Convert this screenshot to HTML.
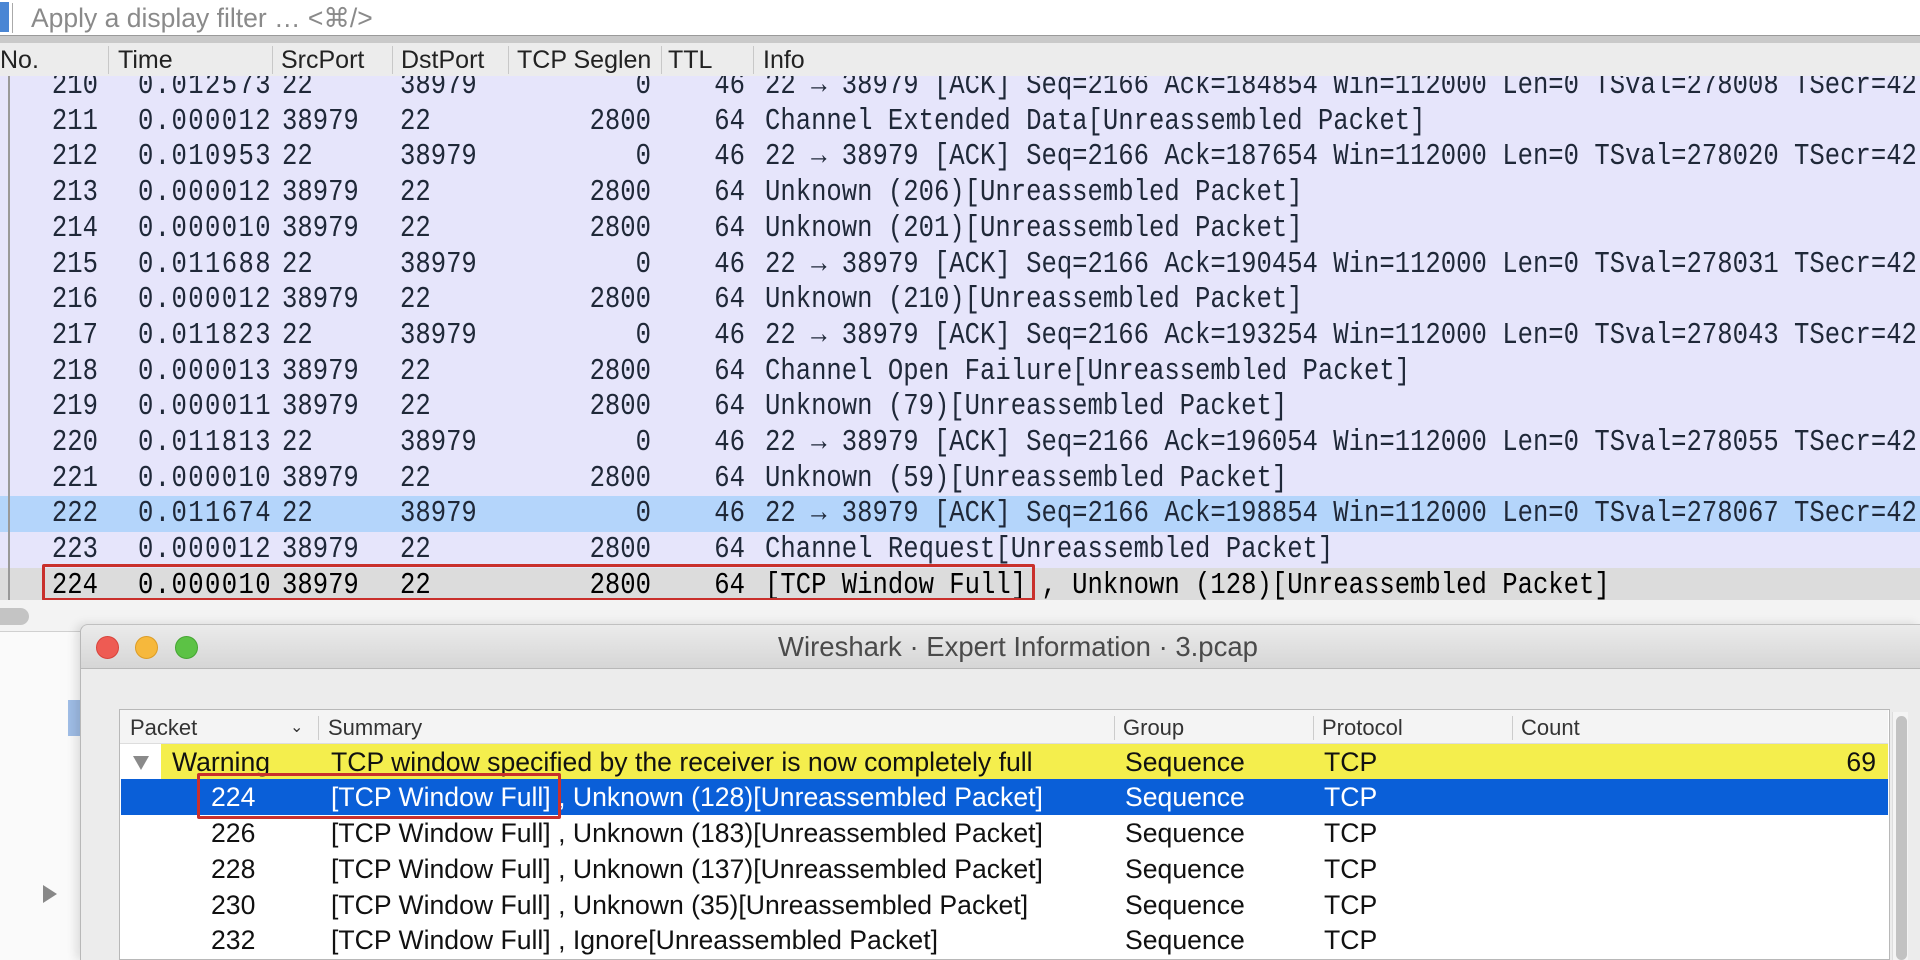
<!DOCTYPE html>
<html><head><meta charset="utf-8"><style>
*{margin:0;padding:0;box-sizing:border-box}
body{width:1920px;height:960px;overflow:hidden;background:#ececec;position:relative;font-family:"Liberation Sans",sans-serif}
.abs{position:absolute}
.mono{font-family:"Liberation Mono","DejaVu Sans Mono",monospace;font-size:25.6px;color:#1f2838;white-space:pre}
.row{position:absolute;left:0;width:1920px;height:36px;background:#e6e5fb}
.row span{position:absolute;top:0;line-height:36px;transform:scaleY(1.18);transform-origin:50% 55%}
.row span:nth-child(2){letter-spacing:1.4px}
.r{text-align:right}
.hd{position:absolute;top:43px;height:33px;line-height:35px;font-size:25px;color:#222}
.dv{position:absolute;top:46px;height:28px;width:1px;background:#c8c8c8}
.er{position:absolute;left:121px;width:1767px;height:36px;font-size:26.6px;line-height:36px;color:#111;white-space:pre}
.er span{position:absolute;top:0}
.th{position:absolute;top:0;line-height:35px;font-size:22px;color:#333}
.tdv{position:absolute;top:6px;height:24px;width:1px;background:#ccc}
</style></head><body>
<div class="abs" style="left:0;top:0;width:1920px;height:36px;background:#fff"></div>
<div class="abs" style="left:0;top:2px;width:9px;height:30px;background:#4a86d4"></div>
<div class="abs" style="left:12px;top:3px;width:1px;height:30px;background:#aaa"></div>
<div class="abs" style="left:31px;top:0;line-height:36px;font-size:26.5px;color:#8a8a8a">Apply a display filter … &lt;⌘/&gt;</div>
<div class="abs" style="left:0;top:35px;width:1920px;height:8px;background:#c9c9c9;border-top:1px solid #9a9a9a"></div>
<div class="abs" style="left:0;top:43px;width:1920px;height:33px;background:#ececec"></div>
<div class="hd" style="left:0">No.</div>
<div class="dv" style="left:108px"></div><div class="hd" style="left:118px">Time</div>
<div class="dv" style="left:272px"></div><div class="hd" style="left:281px">SrcPort</div>
<div class="dv" style="left:392px"></div><div class="hd" style="left:401px">DstPort</div>
<div class="dv" style="left:508px"></div><div class="hd" style="left:517px">TCP Seglen</div>
<div class="dv" style="left:661px"></div><div class="hd" style="left:668px">TTL</div>
<div class="dv" style="left:753px"></div><div class="hd" style="left:763px">Info</div>
<div class="abs mono" style="left:0;top:76px;width:1920px;height:524px;overflow:hidden">
<div style="position:absolute;left:0;top:-8px;width:1920px">
<div class="row" style="top:0"><span class="r" style="left:0;width:98px">210</span><span style="left:138px">0.012573</span><span style="left:282px">22</span><span style="left:400px">38979</span><span class="r" style="left:500px;width:151px">0</span><span class="r" style="left:700px;width:45px">46</span><span style="left:765px">22 → 38979 [ACK] Seq=2166 Ack=184854 Win=112000 Len=0 TSval=278008 TSecr=42</span></div>
<div class="row" style="top:35.7px"><span class="r" style="left:0;width:98px">211</span><span style="left:138px">0.000012</span><span style="left:282px">38979</span><span style="left:400px">22</span><span class="r" style="left:500px;width:151px">2800</span><span class="r" style="left:700px;width:45px">64</span><span style="left:765px">Channel Extended Data[Unreassembled Packet]</span></div>
<div class="row" style="top:71.4px"><span class="r" style="left:0;width:98px">212</span><span style="left:138px">0.010953</span><span style="left:282px">22</span><span style="left:400px">38979</span><span class="r" style="left:500px;width:151px">0</span><span class="r" style="left:700px;width:45px">46</span><span style="left:765px">22 → 38979 [ACK] Seq=2166 Ack=187654 Win=112000 Len=0 TSval=278020 TSecr=42</span></div>
<div class="row" style="top:107.1px"><span class="r" style="left:0;width:98px">213</span><span style="left:138px">0.000012</span><span style="left:282px">38979</span><span style="left:400px">22</span><span class="r" style="left:500px;width:151px">2800</span><span class="r" style="left:700px;width:45px">64</span><span style="left:765px">Unknown (206)[Unreassembled Packet]</span></div>
<div class="row" style="top:142.8px"><span class="r" style="left:0;width:98px">214</span><span style="left:138px">0.000010</span><span style="left:282px">38979</span><span style="left:400px">22</span><span class="r" style="left:500px;width:151px">2800</span><span class="r" style="left:700px;width:45px">64</span><span style="left:765px">Unknown (201)[Unreassembled Packet]</span></div>
<div class="row" style="top:178.5px"><span class="r" style="left:0;width:98px">215</span><span style="left:138px">0.011688</span><span style="left:282px">22</span><span style="left:400px">38979</span><span class="r" style="left:500px;width:151px">0</span><span class="r" style="left:700px;width:45px">46</span><span style="left:765px">22 → 38979 [ACK] Seq=2166 Ack=190454 Win=112000 Len=0 TSval=278031 TSecr=42</span></div>
<div class="row" style="top:214.2px"><span class="r" style="left:0;width:98px">216</span><span style="left:138px">0.000012</span><span style="left:282px">38979</span><span style="left:400px">22</span><span class="r" style="left:500px;width:151px">2800</span><span class="r" style="left:700px;width:45px">64</span><span style="left:765px">Unknown (210)[Unreassembled Packet]</span></div>
<div class="row" style="top:249.9px"><span class="r" style="left:0;width:98px">217</span><span style="left:138px">0.011823</span><span style="left:282px">22</span><span style="left:400px">38979</span><span class="r" style="left:500px;width:151px">0</span><span class="r" style="left:700px;width:45px">46</span><span style="left:765px">22 → 38979 [ACK] Seq=2166 Ack=193254 Win=112000 Len=0 TSval=278043 TSecr=42</span></div>
<div class="row" style="top:285.6px"><span class="r" style="left:0;width:98px">218</span><span style="left:138px">0.000013</span><span style="left:282px">38979</span><span style="left:400px">22</span><span class="r" style="left:500px;width:151px">2800</span><span class="r" style="left:700px;width:45px">64</span><span style="left:765px">Channel Open Failure[Unreassembled Packet]</span></div>
<div class="row" style="top:321.3px"><span class="r" style="left:0;width:98px">219</span><span style="left:138px">0.000011</span><span style="left:282px">38979</span><span style="left:400px">22</span><span class="r" style="left:500px;width:151px">2800</span><span class="r" style="left:700px;width:45px">64</span><span style="left:765px">Unknown (79)[Unreassembled Packet]</span></div>
<div class="row" style="top:357px"><span class="r" style="left:0;width:98px">220</span><span style="left:138px">0.011813</span><span style="left:282px">22</span><span style="left:400px">38979</span><span class="r" style="left:500px;width:151px">0</span><span class="r" style="left:700px;width:45px">46</span><span style="left:765px">22 → 38979 [ACK] Seq=2166 Ack=196054 Win=112000 Len=0 TSval=278055 TSecr=42</span></div>
<div class="row" style="top:392.7px"><span class="r" style="left:0;width:98px">221</span><span style="left:138px">0.000010</span><span style="left:282px">38979</span><span style="left:400px">22</span><span class="r" style="left:500px;width:151px">2800</span><span class="r" style="left:700px;width:45px">64</span><span style="left:765px">Unknown (59)[Unreassembled Packet]</span></div>
<div class="row" style="top:428.4px;background:#b4d5fb"><span class="r" style="left:0;width:98px">222</span><span style="left:138px">0.011674</span><span style="left:282px">22</span><span style="left:400px">38979</span><span class="r" style="left:500px;width:151px">0</span><span class="r" style="left:700px;width:45px">46</span><span style="left:765px">22 → 38979 [ACK] Seq=2166 Ack=198854 Win=112000 Len=0 TSval=278067 TSecr=42</span></div>
<div class="row" style="top:464.1px"><span class="r" style="left:0;width:98px">223</span><span style="left:138px">0.000012</span><span style="left:282px">38979</span><span style="left:400px">22</span><span class="r" style="left:500px;width:151px">2800</span><span class="r" style="left:700px;width:45px">64</span><span style="left:765px">Channel Request[Unreassembled Packet]</span></div>
<div class="row" style="top:499.8px;background:#dcdcdc;color:#000"><span class="r" style="left:0;width:98px">224</span><span style="left:138px">0.000010</span><span style="left:282px">38979</span><span style="left:400px">22</span><span class="r" style="left:500px;width:151px">2800</span><span class="r" style="left:700px;width:45px">64</span><span style="left:765px">[TCP Window Full] , Unknown (128)[Unreassembled Packet]</span></div>
</div></div>
<div class="abs" style="left:8px;top:76px;width:2px;height:524px;background:#999"></div>
<div class="abs" style="left:42px;top:564px;width:993px;height:37px;border:3px solid #c9302c;border-radius:2px"></div>
<div class="abs" style="left:0;top:600px;width:1920px;height:42px;background:#f3f3f3"></div>
<div class="abs" style="left:0;top:608px;width:29px;height:17px;background:#c4c4c4;border-radius:0 9px 9px 0"></div>
<div class="abs" style="left:0;top:631px;width:80px;height:329px;background:#fafafa;border-top:1px solid #d0d0d0"></div>
<div class="abs" style="left:68px;top:700px;width:12px;height:36px;background:#9fbde6"></div>
<div class="abs" style="left:43px;top:885px;width:0;height:0;border-left:14px solid #888;border-top:9px solid transparent;border-bottom:9px solid transparent"></div>
<div class="abs" style="left:80px;top:624px;width:1840px;height:336px;background:#ececec;border-left:1px solid #b8b8b8;border-top:1px solid #c0c0c0;border-radius:8px 0 0 0;box-shadow:-4px 0 10px rgba(0,0,0,0.12)"></div>
<div class="abs" style="left:81px;top:625px;width:1839px;height:44px;background:linear-gradient(#ebebeb,#d6d6d6);border-bottom:1px solid #b8b8b8;border-radius:8px 0 0 0"></div>
<div class="abs" style="left:96px;top:636px;width:23px;height:23px;border-radius:50%;background:#ee5b53;border:1px solid #d8433b"></div>
<div class="abs" style="left:135px;top:636px;width:23px;height:23px;border-radius:50%;background:#f6b83c;border:1px solid #dc9c25"></div>
<div class="abs" style="left:175px;top:636px;width:23px;height:23px;border-radius:50%;background:#5cc245;border:1px solid #44a532"></div>
<div class="abs" style="left:498px;width:1040px;top:625px;line-height:44px;text-align:center;font-size:27.5px;color:#4a4a4a">Wireshark · Expert Information · 3.pcap</div>
<div class="abs" style="left:119px;top:709px;width:1771px;height:251px;background:#fff;border:1px solid #b8b8b8"></div>
<div class="abs" style="left:120px;top:710px;width:1768px;height:34px;background:#f4f4f4;border-bottom:1px solid #ddd">
<div class="th" style="left:10px">Packet</div><div class="th" style="left:170px;font-size:16px">⌄</div>
<div class="tdv" style="left:198px"></div><div class="th" style="left:208px">Summary</div>
<div class="tdv" style="left:994px"></div><div class="th" style="left:1003px">Group</div>
<div class="tdv" style="left:1193px"></div><div class="th" style="left:1202px">Protocol</div>
<div class="tdv" style="left:1392px"></div><div class="th" style="left:1401px">Count</div>
</div>
<div class="abs" style="left:1892px;top:712px;width:16px;height:248px;background:#f4f4f4;border-left:1px solid #ddd"></div>
<div class="abs" style="left:1896px;top:716px;width:11px;height:244px;background:#c2c2c2;border-radius:6px"></div>
<div class="er" style="top:744px"><div class="abs" style="left:40px;top:0;width:1727px;height:36px;background:#f4ee4d"></div>
<div class="abs" style="left:12px;top:12px;width:0;height:0;border-top:14px solid #8a8a8a;border-left:8px solid transparent;border-right:8px solid transparent"></div>
<span style="left:51px">Warning</span><span style="left:210px">TCP window specified by the receiver is now completely full</span><span style="left:1004px">Sequence</span><span style="left:1203px">TCP</span><span style="left:1690px;width:65px;text-align:right">69</span></div>
<div class="er" style="top:779px;background:#0a5fd8;color:#fff"><span style="left:90px">224</span><span style="left:210px">[TCP Window Full] , Unknown (128)[Unreassembled Packet]</span><span style="left:1004px">Sequence</span><span style="left:1203px">TCP</span></div>
<div class="er" style="top:815px"><span style="left:90px">226</span><span style="left:210px">[TCP Window Full] , Unknown (183)[Unreassembled Packet]</span><span style="left:1004px">Sequence</span><span style="left:1203px">TCP</span></div>
<div class="er" style="top:851px"><span style="left:90px">228</span><span style="left:210px">[TCP Window Full] , Unknown (137)[Unreassembled Packet]</span><span style="left:1004px">Sequence</span><span style="left:1203px">TCP</span></div>
<div class="er" style="top:887px"><span style="left:90px">230</span><span style="left:210px">[TCP Window Full] , Unknown (35)[Unreassembled Packet]</span><span style="left:1004px">Sequence</span><span style="left:1203px">TCP</span></div>
<div class="er" style="top:922px"><span style="left:90px">232</span><span style="left:210px">[TCP Window Full] , Ignore[Unreassembled Packet]</span><span style="left:1004px">Sequence</span><span style="left:1203px">TCP</span></div>
<div class="abs" style="left:197px;top:773px;width:364px;height:46px;border:3px solid #c9302c;border-radius:2px"></div>
</body></html>
